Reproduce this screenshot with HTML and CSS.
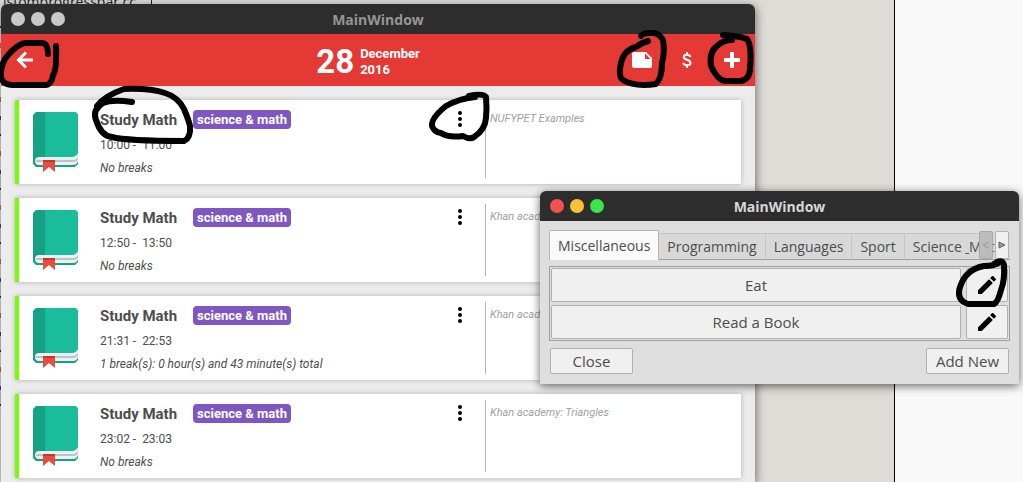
FILE: index.html
```html
<!DOCTYPE html>
<html lang="en">
<head>
    <meta charset="UTF-8">
    <meta name="viewport" content="width=device-width, initial-scale=1.0">
    <title>MainWindow</title>
    <link rel="stylesheet" href="styles.css">
</head>
<body>
    <!-- Shared icons -->
    <svg class="icon-defs" aria-hidden="true">
        <symbol id="icon-book" viewBox="0 0 45 60">
            <path fill="#16a085" d="M3 0H42L45 3V52L42 55H3L0 52V3Z"/>
            <path fill="#1abc9c" d="M12 0H41Q45 0 45 4V46H12Z"/>
            <path fill="#ecf0f1" d="M6 45H39Q43 45 45 41V49Q44 53 40 53H6Q2 53 2 49T6 45Z"/>
            <path fill="#bdc3c7" d="M3 48H41Q44 47 45 45V47Q44 50 40 50H3Z"/>
            <path fill="#e74c3c" d="M10 48H22V60L16 55L10 60Z"/>
            <path fill="#c0392b" d="M10 48H22V50H10Z"/>
        </symbol>
        <symbol id="icon-dots" viewBox="0 0 24 24">
            <circle cx="12" cy="6" r="2"/><circle cx="12" cy="12" r="2"/><circle cx="12" cy="18" r="2"/>
        </symbol>
        <symbol id="icon-pencil" viewBox="0 0 24 24">
            <path d="M3 17.25V21h3.75L17.81 9.94l-3.75-3.75L3 17.25zM20.71 7.04a1 1 0 0 0 0-1.41l-2.34-2.34a1 1 0 0 0-1.41 0l-1.83 1.83 3.75 3.75 1.83-1.83z"/>
        </symbol>
    </svg>

    <div class="desktop">
        <div class="editor">
            <div class="editor-tab">istomprogressbar.cc</div>
            <div class="editor-code"></div>
        </div>
        <div class="side-panel"></div>

        <!-- Schedule window -->
        <main class="window main-window">
            <div class="titlebar inactive">
                <div class="window-buttons"><i></i><i></i><i></i></div>
                <span class="window-title">MainWindow</span>
            </div>
            <header class="toolbar">
                <div class="toolbar-side">
                    <button class="icon-button" aria-label="Back">
                        <svg viewBox="0 0 24 24"><path d="M21 12H7M14 4.500L6.500 12l7.500 7.500" fill="none" stroke="#fff" stroke-width="3"/></svg>
                    </button>
                </div>
                <div class="date">
                    <span class="day">28</span>
                    <span class="month">December<br>2016</span>
                </div>
                <div class="toolbar-side toolbar-actions">
                    <button class="icon-button" aria-label="Notes">
                        <svg viewBox="0 0 24 24"><path fill="#fff" d="M22 10l-6-6H4c-1.100 0-2 .9-2 2v12.010c0 1.100.9 1.990 2 1.990l16-.010c1.100 0 2-.890 2-1.990v-8zm-7-4.500l5.500 5.500H15V5.500z"/></svg>
                    </button>
                    <button class="icon-button" aria-label="Budget">
                        <svg viewBox="0 0 24 24"><path d="M15.500 9C15 7.500 14 6.800 12 6.800S8.800 7.500 8.800 9C8.800 12.500 15.500 11 15.500 15 15.500 16.500 14 17.200 12 17.200S8.500 16.500 8.400 14.800M12 4V7M12 17V20" fill="none" stroke="#fff" stroke-width="2"/></svg>
                    </button>
                    <button class="icon-button" aria-label="Add">
                        <svg viewBox="0 0 24 24"><path d="M12 4V20M4 12H20" stroke="#fff" stroke-width="4"/></svg>
                    </button>
                </div>
            </header>

            <div class="schedule">
                <article class="card">
                    <svg class="book"><use href="#icon-book"/></svg>
                    <div class="details">
                        <div class="heading"><h2>Study Math</h2><span class="tag">science &amp; math</span></div>
                        <p class="time">10:00 - &nbsp;11:00</p>
                        <p class="breaks">No breaks</p>
                    </div>
                    <button class="menu" aria-label="More"><svg><use href="#icon-dots"/></svg></button>
                    <p class="note">NUFYPET Examples</p>
                </article>
                <article class="card">
                    <svg class="book"><use href="#icon-book"/></svg>
                    <div class="details">
                        <div class="heading"><h2>Study Math</h2><span class="tag">science &amp; math</span></div>
                        <p class="time">12:50 - &nbsp;13:50</p>
                        <p class="breaks">No breaks</p>
                    </div>
                    <button class="menu" aria-label="More"><svg><use href="#icon-dots"/></svg></button>
                    <p class="note">Khan academy</p>
                </article>
                <article class="card">
                    <svg class="book"><use href="#icon-book"/></svg>
                    <div class="details">
                        <div class="heading"><h2>Study Math</h2><span class="tag">science &amp; math</span></div>
                        <p class="time">21:31 - &nbsp;22:53</p>
                        <p class="breaks">1 break(s): 0 hour(s) and 43 minute(s) total</p>
                    </div>
                    <button class="menu" aria-label="More"><svg><use href="#icon-dots"/></svg></button>
                    <p class="note">Khan academy</p>
                </article>
                <article class="card">
                    <svg class="book"><use href="#icon-book"/></svg>
                    <div class="details">
                        <div class="heading"><h2>Study Math</h2><span class="tag">science &amp; math</span></div>
                        <p class="time">23:02 - &nbsp;23:03</p>
                        <p class="breaks">No breaks</p>
                    </div>
                    <button class="menu" aria-label="More"><svg><use href="#icon-dots"/></svg></button>
                    <p class="note">Khan academy: Triangles</p>
                </article>
            </div>
        </main>

        <!-- Activity picker -->
        <section class="window dialog">
            <div class="titlebar">
                <div class="window-buttons"><i class="close"></i><i class="minimize"></i><i class="maximize"></i></div>
                <span class="window-title">MainWindow</span>
            </div>
            <div class="dialog-body">
                <div class="tabs">
                    <button class="tab active">Miscellaneous</button>
                    <button class="tab">Programming</button>
                    <button class="tab">Languages</button>
                    <button class="tab">Sport</button>
                    <button class="tab">Science <u>&nbsp;</u>Math</button>
                    <div class="tab-scroll">
                        <button class="scroll-button" disabled aria-label="Previous tabs"><svg viewBox="0 0 8 8"><path d="M7 1L1 4l6 3" fill="none" stroke="#999"/></svg></button>
                        <button class="scroll-button" aria-label="Next tabs"><svg viewBox="0 0 8 8"><path d="M1 1l6 3-6 3z" fill="#999" stroke="#666"/></svg></button>
                    </div>
                </div>
                <div class="activities">
                    <button class="btn">Eat</button>
                    <button class="btn" aria-label="Edit Eat"><svg class="pencil"><use href="#icon-pencil"/></svg></button>
                    <button class="btn">Read a Book</button>
                    <button class="btn" aria-label="Edit Read a Book"><svg class="pencil"><use href="#icon-pencil"/></svg></button>
                </div>
                <div class="dialog-actions">
                    <button class="btn">Close</button>
                    <button class="btn">Add New</button>
                </div>
            </div>
        </section>

        <!-- Pen marks -->
        <svg class="ink" width="1023" height="482" aria-hidden="true">
            <path d="M48 54Q48 44 43 43H25Q18 44 8 55Q0 64 1 78Q4 85 12 85H46Q52 84 53 75Q57 70 56 46"/>
            <path d="M132 102Q112 99 103 103Q92 110 96 120Q101 136 112 137Q126 141 184 141Q191 138 190 126Q189 121 184 109Q178 97 165 93Q150 88 124 89Q104 96 97 106"/>
            <path d="M475 97Q458 99 446 106Q431 118 432 126Q434 132 441 133Q448 138 463 136Q470 140 474 137Q485 130 486 118Q487 108 486 97Q483 93 469 96"/>
            <path d="M648 41Q641 43 636 47Q624 50 621 63Q618 77 623 80Q634 87 656 84Q662 78 662 63Q665 52 663 40Q659 32 650 33Q643 33 641 36"/>
            <path d="M732 40Q723 40 717 46Q709 52 711 66Q718 81 726 81H741Q750 79 750 68Q752 46 747 39Q740 36 723 35"/>
            <path d="M994 264Q1002 258 1004 265Q1005 280 1001 290Q998 302 994 304H968Q956 300 960 287Q966 269 984 266Q994 266 1000 262"/>
        </svg>
    </div>
</body>
</html>
```
FILE: styles.css
```css
* {
    box-sizing: border-box;
}

body {
    margin: 0;
    font-family: Roboto, sans-serif;
    color: #4d4d4d;
}

button {
    padding: 0;
    border: none;
    background: none;
    font: inherit;
    color: inherit;
    cursor: pointer;
}

svg {
    display: block;
}

h2,
p {
    margin: 0;
}

.icon-defs {
    position: absolute;
    width: 0;
    height: 0;
}

.desktop {
    position: relative;
    display: flex;
    height: 100vh;
    overflow: hidden;
    background-color: #dfdcd7;
}

.editor {
    flex: 1;
}

.editor-tab {
    width: 152px;
    height: 20px;
    padding-left: 3px;
    margin-top: -8px;
    border-right: 1px solid #222;
    background-color: #dcdcdc;
    font: 14px/20px "Open Sans", sans-serif;
    color: #222;
    white-space: nowrap;
}

.editor-code {
    width: 1px;
    height: 403px;
    background: repeating-linear-gradient(#ccc 0 14px, #333 14px 16px, #ddd 16px 31px, #b87040 31px 36px, #ddd 36px 50px, #448 50px 54px);
}

.side-panel {
    width: 129px;
    border-left: 1px solid #000;
    background-color: #f9f9f9;
}

/* Windows */
.window {
    position: absolute;
    border-radius: 6px 6px 0 0;
    overflow: hidden;
}

.main-window {
    top: 4px;
    left: 1px;
    right: 268px;
    bottom: 0;
    background-color: #ececec;
    box-shadow: 1px 2px 10px rgba(0, 0, 0, 0.5);
}

.dialog {
    top: 191px;
    left: 540px;
    right: 4px;
    background-color: #dedede;
    box-shadow: 0 2px 10px rgba(0, 0, 0, 0.6);
    font-family: "Open Sans", sans-serif;
}

.titlebar {
    display: grid;
    grid-template-columns: 1fr auto 1fr;
    align-items: center;
    height: 30px;
    padding: 0 10px;
    background-color: #2d2d2d;
    color: #d8d8d8;
}

.titlebar.inactive {
    color: #969696;
}

.window-title {
    padding-top: 2px;
    font: bold 14px/20px "Open Sans", sans-serif;
}

.window-buttons {
    display: flex;
    gap: 6px;
}

.window-buttons i {
    width: 14px;
    height: 14px;
    border-radius: 50%;
    background-color: #c8c8c8;
}

.window-buttons .close {
    background-color: #f4504f;
}

.window-buttons .minimize {
    background-color: #fbc137;
}

.window-buttons .maximize {
    background-color: #38e54d;
}

/* Toolbar */
.toolbar {
    display: grid;
    grid-template-columns: 1fr auto 1fr;
    align-items: center;
    height: 52px;
    padding: 0 11px;
    background-color: #e53935;
    color: #fff;
}

.toolbar-side {
    display: flex;
}

.toolbar-actions {
    justify-content: flex-end;
    gap: 21px;
}

.icon-button {
    width: 24px;
    height: 24px;
}

.date {
    display: flex;
    align-items: center;
    gap: 6px;
    padding: 3px 20px 0 0;
    font-weight: bold;
}

.day {
    font-size: 33px;
    line-height: 40px;
}

.month {
    font-size: 13px;
    line-height: 16px;
}

/* Schedule */
.schedule {
    display: flex;
    flex-direction: column;
    gap: 14px;
    padding: 14px;
}

.card {
    display: flex;
    flex-shrink: 0;
    height: 84px;
    padding: 6px 0;
    border-left: 4px solid #76ff03;
    background-color: #fff;
    box-shadow: 0 0 5px rgba(0, 0, 0, 0.25);
}

.book {
    width: 45px;
    height: 60px;
    margin: 6px 22px 0 14px;
}

.details {
    flex: 1;
    font-size: 12px;
}

.heading {
    display: flex;
    align-items: center;
    gap: 16px;
    padding-top: 3px;
}

.heading h2 {
    padding-top: 2px;
    font-size: 15px;
    line-height: 18px;
}

.tag {
    padding: 0 4px;
    border-radius: 4px;
    background-color: #7e57c2;
    color: #fff;
    font-size: 13px;
    font-weight: bold;
    line-height: 19px;
}

.time,
.breaks {
    line-height: 16px;
    margin-top: 8px;
}

.breaks {
    margin-top: 7px;
    font-style: italic;
}

.menu {
    align-self: flex-start;
    width: 24px;
    height: 24px;
    margin: 1px 13px 0 0;
}

.menu svg {
    width: 24px;
    height: 24px;
}

.note {
    width: 256px;
    padding: 6px 4px;
    border-left: 1px solid #b4b4b4;
    color: #a0a0a0;
    font-size: 11px;
    font-style: italic;
    line-height: 14px;
}

/* Dialog */
.dialog-body {
    padding: 9px 9px 10px;
    font-size: 15px;
}

.tabs {
    position: relative;
    display: flex;
    align-items: flex-end;
    height: 30px;
    overflow: hidden;
    box-shadow: inset 0 -1px #a0a0a0;
}

.tab {
    flex-shrink: 0;
    height: 27px;
    padding: 0 8px;
    border: 1px solid #c4c4c4;
    border-bottom-color: #a0a0a0;
    border-left: none;
    background-color: #d8d8d8;
    font-size: 14px;
    white-space: nowrap;
}

.tab.active {
    height: 30px;
    border: 1px solid #b4b4b4;
    border-bottom: none;
    border-radius: 2px 2px 0 0;
    background-color: #fafafa;
}

.tab-scroll {
    position: absolute;
    top: 1px;
    right: 1px;
    display: flex;
    gap: 2px;
}

.scroll-button {
    display: flex;
    align-items: center;
    justify-content: center;
    width: 14px;
    height: 28px;
    border: 1px solid #b4b4b4;
    border-radius: 2px;
    background-color: #f0f0f0;
}

.scroll-button:disabled {
    background-color: #bcbcbc;
    border-color: #a8a8a8;
}

.scroll-button svg {
    width: 8px;
    height: 8px;
}

.activities {
    display: grid;
    grid-template-columns: 1fr 42px;
    gap: 3px 5px;
    margin: 6px 0 7px;
    padding: 1px;
    border: 1px solid #a0a0a0;
}

.btn {
    display: flex;
    align-items: center;
    justify-content: center;
    height: 34px;
    border: 1px solid #b0b0b0;
    border-radius: 2px;
    background-color: #f0f0f0;
}

.pencil {
    width: 24px;
    height: 24px;
}

.dialog-actions {
    display: flex;
    justify-content: space-between;
    padding: 0 1px;
}

.dialog-actions .btn {
    width: 83px;
    height: 26px;
}

/* Pen marks lie over both windows */
.ink {
    position: absolute;
    top: 0;
    left: 0;
    fill: none;
    stroke: #000;
    stroke-width: 6;
    stroke-linecap: round;
    stroke-linejoin: round;
    pointer-events: none;
}
```
